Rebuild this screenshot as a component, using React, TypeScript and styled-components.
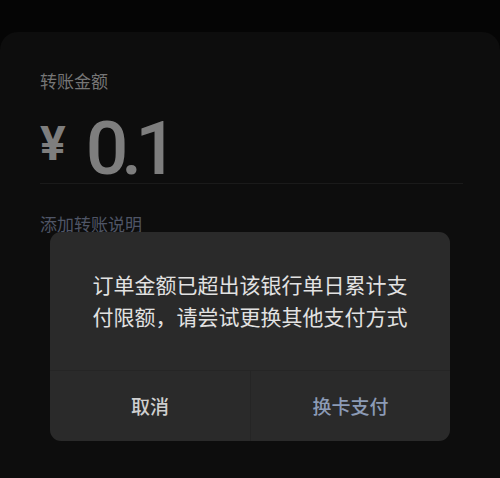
import styled, { createGlobalStyle } from 'styled-components';

const GlobalStyle = createGlobalStyle`
  html, body {
    margin: 0;
    padding: 0;
    background: #050505;
  }
  body {
    font-family: "Noto Sans CJK SC", "Noto Sans", sans-serif;
  }
`;

const Page = styled.div`
  position: relative;
  width: 500px;
  height: 478px;
  overflow: hidden;
  background: #050505;
  padding-top: 32px;
  box-sizing: border-box;
`;

const Card = styled.div`
  height: 100%;
  background: #0d0d0d;
  border-radius: 18px 18px 0 0;
  padding: 38px 37px 0 40px;
  box-sizing: border-box;
`;

const Label = styled.div`
  font-size: 17px;
  line-height: 22px;
  color: #767676;
`;

const AmountRow = styled.div`
  display: flex;
  align-items: flex-start;
  gap: 20px;
  height: 92px;
  padding-top: 19px;
  border-bottom: 1px solid #1a1a1a;
  box-sizing: border-box;
`;

const Currency = styled.span`
  font-family: Roboto, "Liberation Sans", sans-serif;
  font-weight: 700;
  font-size: 48px;
  line-height: 48px;
  margin-top: 9px;
  color: #7e7e7e;
`;

const Value = styled.span`
  font-family: Roboto, "Liberation Sans", sans-serif;
  font-weight: 500;
  font-size: 75px;
  line-height: 75px;
  letter-spacing: -7px;
  color: #7e7e7e;
`;

const Note = styled.div`
  margin-top: 28px;
  font-size: 17px;
  line-height: 24px;
  color: #4f5566;
`;

const Dialog = styled.div`
  position: absolute;
  top: 232px;
  left: 50px;
  width: 400px;
  height: 209px;
  background: #2a2a2a;
  border-radius: 11px;
  display: flex;
  flex-direction: column;
  overflow: hidden;
`;

const Message = styled.div`
  padding: 36px 42px 0;
  height: 139px;
  box-sizing: border-box;
  font-size: 21px;
  line-height: 32px;
  color: #e2e2e2;
  text-align: center;
  border-bottom: 1px solid #252525;
`;

const Actions = styled.div`
  flex: 1;
  display: grid;
  grid-template-columns: 1fr 1fr;
`;

const Action = styled.button<{ $primary?: boolean }>`
  border: none;
  background: transparent;
  font-family: "Noto Sans CJK SC", sans-serif;
  font-size: 19px;
  font-weight: 500;
  color: ${(p) => (p.$primary ? '#8c9bb6' : '#cfcfcf')};
  border-left: ${(p) => (p.$primary ? '1px solid #252525' : 'none')};
  padding: 0 0 2px;
  cursor: pointer;
`;

export default function App() {
  return (
    <>
      <GlobalStyle />
      <Page>
        <Card>
          <Label>转账金额</Label>
          <AmountRow>
            <Currency>¥</Currency>
            <Value>0.1</Value>
          </AmountRow>
          <Note>添加转账说明</Note>
        </Card>
        <Dialog>
          <Message>订单金额已超出该银行单日累计支付限额，请尝试更换其他支付方式</Message>
          <Actions>
            <Action>取消</Action>
            <Action $primary>换卡支付</Action>
          </Actions>
        </Dialog>
      </Page>
    </>
  );
}
